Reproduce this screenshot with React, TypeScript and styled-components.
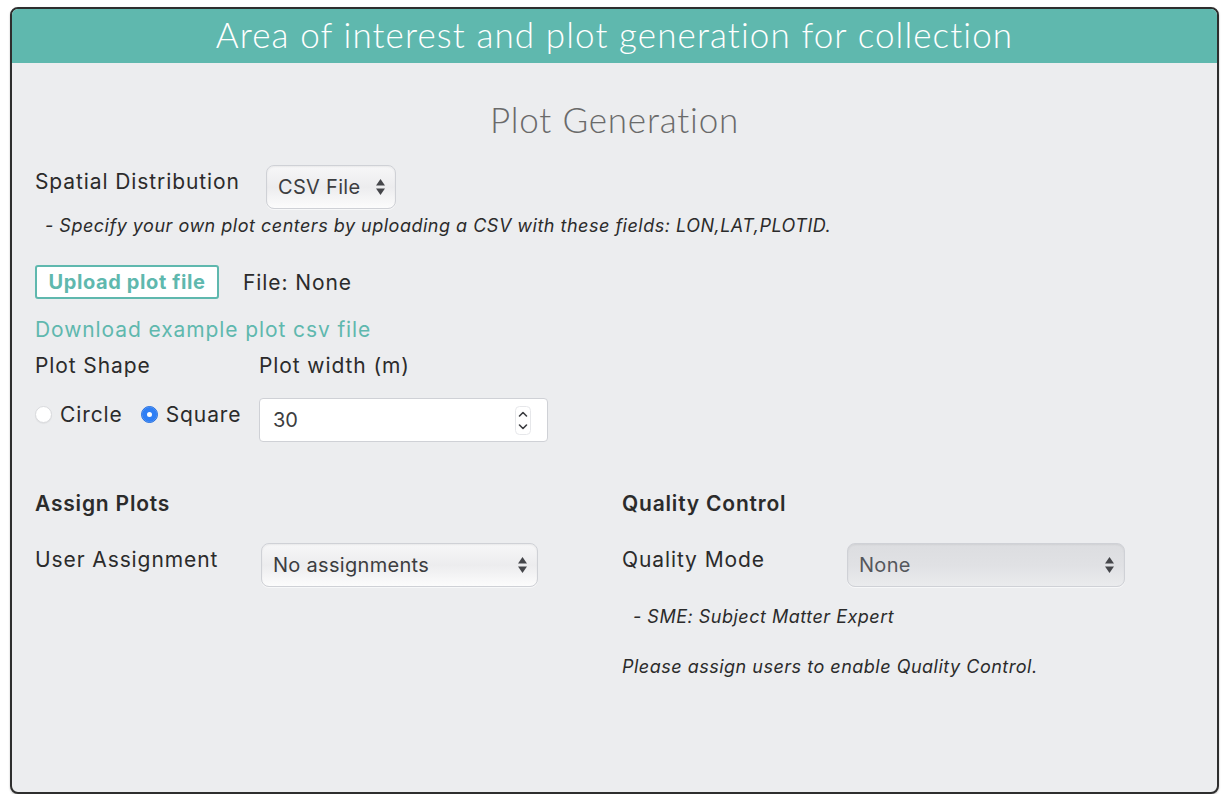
import React from "react";
import styled, { createGlobalStyle } from "styled-components";

const Global = createGlobalStyle`
  html, body { margin: 0; padding: 0; background: #ffffff; }
  body { font-family: Inter, "Open Sans", "Liberation Sans", sans-serif; color: #2b2b2b; }
  * { box-sizing: border-box; }
`;

const Panel = styled.section`
  margin: 7px 0 0 10px;
  width: 1209px;
  height: 787px;
  border: 2px solid #2e2e2e;
  border-radius: 8px;
  background: #ecedef;
  overflow: hidden;
  display: flex;
  flex-direction: column;
  box-shadow: 0 1px 2px rgba(0, 0, 0, 0.25);
`;

const Header = styled.header`
  height: 54px;
  background: #5fb8ae;
  color: #ffffff;
  display: flex;
  align-items: center;
  justify-content: center;
  font-family: Lato, "Open Sans", sans-serif;
  font-weight: 300;
  font-size: 35px;
  letter-spacing: 1.1px;
  padding-bottom: 4px;
`;

const Body = styled.div`
  padding: 0 23px;
  display: flex;
  flex-direction: column;
`;

const Title = styled.h2`
  margin: 36px 0 0;
  height: 40px;
  line-height: 40px;
  text-align: center;
  font-family: Lato, "Open Sans", sans-serif;
  font-weight: 300;
  font-size: 35px;
  color: #6a6a6a;
  letter-spacing: 0.8px;
`;

const Row = styled.div<{ $mt: number; $labelW: number }>`
  margin-top: ${(p) => p.$mt}px;
  display: grid;
  grid-template-columns: ${(p) => p.$labelW}px auto;
  align-items: center;
`;

const Label = styled.span<{ $lift?: number }>`
  font-size: 21px;
  line-height: 24px;
  letter-spacing: 0.9px;
  color: #2b2b2b;
  margin-top: ${(p) => -(p.$lift ?? 10)}px;
`;

const Note = styled.p<{ $mt: number; $indent: number }>`
  margin: ${(p) => p.$mt}px 0 0 ${(p) => p.$indent}px;
  font-size: 18px;
  line-height: 20px;
  letter-spacing: 0.5px;
  font-style: italic;
  color: #2b2b2b;
`;

const SelectWrap = styled.div<{ $w: number; $h: number; $disabled?: boolean }>`
  position: relative;
  width: ${(p) => p.$w}px;
  height: ${(p) => p.$h}px;
  border: 1px solid #cfd1d6;
  border-radius: 8px;
  background: ${(p) =>
    p.$disabled
      ? "linear-gradient(#dcdde0 0%, #e0e1e4 50%, #eaebed 100%)"
      : "linear-gradient(#f7f7f8 0%, #ececee 50%, #fcfcfc 100%)"};
  box-shadow: inset 0 1px 2px rgba(0, 0, 0, 0.06), 0 1px 0 rgba(255, 255, 255, 0.6);
  display: flex;
  align-items: center;
  padding-left: 11px;
  font-size: 20px;
  letter-spacing: 0.3px;
  color: ${(p) => (p.$disabled ? "#55575c" : "#3c3d40")};
`;

const Arrows = styled.svg`
  position: absolute;
  right: 9px;
  top: 50%;
  transform: translateY(-50%);
`;

const SelectBox: React.FC<{ w: number; h: number; disabled?: boolean; children: React.ReactNode }> = ({
  w,
  h,
  disabled,
  children,
}) => (
  <SelectWrap $w={w} $h={h} $disabled={disabled}>
    {children}
    <Arrows width="11" height="20" viewBox="0 0 11 20">
      <path d="M5.5 2 L10 8.5 L1 8.5 Z" fill="#45464a" />
      <path d="M5.5 18 L10 11.5 L1 11.5 Z" fill="#45464a" />
    </Arrows>
  </SelectWrap>
);

const UploadRow = styled.div`
  margin-top: 29px;
  display: flex;
  align-items: center;
  gap: 24px;
`;

const UploadButton = styled.button`
  height: 34px;
  width: 184px;
  border: 2px solid #5fb8ae;
  border-radius: 3px;
  background: #ffffff;
  color: #5fb8ae;
  font-family: inherit;
  font-weight: 700;
  font-size: 20px;
  letter-spacing: 0.6px;
  padding: 0;
`;

const FileText = styled.span`
  font-size: 21px;
  letter-spacing: 0.9px;
  color: #2b2b2b;
`;

const Link = styled.a`
  margin-top: 19px;
  font-size: 21px;
  line-height: 24px;
  letter-spacing: 0.9px;
  color: #5fb8ae;
  text-decoration: none;
`;

const ShapeGrid = styled.div`
  margin-top: 12px;
  display: grid;
  grid-template-columns: 224px 289px;
  grid-template-rows: 24px 43px;
  row-gap: 20px;
  align-items: center;
`;

const Radios = styled.div`
  display: flex;
  align-items: center;
  margin-top: -10px;
`;

const RadioItem = styled.label`
  display: flex;
  align-items: center;
  gap: 8px;
  font-size: 21px;
  letter-spacing: 0.9px;
  color: #2b2b2b;
  margin-right: 18px;
`;

const RadioDot = styled.span<{ $checked?: boolean }>`
  width: 17px;
  height: 17px;
  border-radius: 50%;
  display: inline-block;
  background: ${(p) => (p.$checked ? "#2f7ff5" : "#ffffff")};
  border: 1px solid ${(p) => (p.$checked ? "#2a73e0" : "#d9dadd")};
  box-shadow: ${(p) => (p.$checked ? "inset 0 0 0 5px #2f7ff5, inset 0 0 0 9px #ffffff" : "0 1px 1px rgba(0,0,0,0.05)")};
`;

const NumberBox = styled.div`
  position: relative;
  width: 289px;
  height: 44px;
  background: #ffffff;
  border: 1px solid #cfd1d6;
  border-radius: 4px;
  display: flex;
  align-items: center;
  padding-left: 13px;
  font-size: 20px;
  color: #3c3d40;
`;

const Spinner = styled.svg`
  position: absolute;
  right: 16px;
  top: 7px;
`;

const Columns = styled.div`
  margin-top: 51px;
  display: grid;
  grid-template-columns: 587px 1fr;
`;

const Column = styled.div`
  display: flex;
  flex-direction: column;
`;

const Heading = styled.h3`
  margin: 0;
  font-size: 21px;
  line-height: 24px;
  letter-spacing: 0.8px;
  font-weight: 600;
  color: #2b2b2b;
`;

export default function App() {
  return (
    <>
      <Global />
      <Panel>
        <Header>Area of interest and plot generation for collection</Header>
        <Body>
          <Title>Plot Generation</Title>
          <Row $mt={26} $labelW={231}>
            <Label>Spatial Distribution</Label>
            <SelectBox w={130} h={44}>CSV File</SelectBox>
          </Row>
          <Note $mt={7} $indent={10}>
            - Specify your own plot centers by uploading a CSV with these fields: LON,LAT,PLOTID.
          </Note>
          <UploadRow>
            <UploadButton>Upload plot file</UploadButton>
            <FileText>File: None</FileText>
          </UploadRow>
          <Link href="#">Download example plot csv file</Link>
          <ShapeGrid>
            <Label $lift={0}>Plot Shape</Label>
            <Label $lift={0}>Plot width (m)</Label>
            <Radios>
              <RadioItem>
                <RadioDot />
                Circle
              </RadioItem>
              <RadioItem>
                <RadioDot $checked />
                Square
              </RadioItem>
            </Radios>
            <NumberBox>
              30
              <Spinner width="16" height="29" viewBox="0 0 16 29">
                <rect x="0.5" y="0.5" width="15" height="28" rx="4" fill="#ffffff" stroke="#e6e7ea" />
                <path d="M4.5 10 L8 6.5 L11.5 10" fill="none" stroke="#3c3d40" strokeWidth="1.6" strokeLinecap="round" strokeLinejoin="round" />
                <path d="M4.5 19 L8 22.5 L11.5 19" fill="none" stroke="#3c3d40" strokeWidth="1.6" strokeLinecap="round" strokeLinejoin="round" />
              </Spinner>
            </NumberBox>
          </ShapeGrid>
          <Columns>
            <Column>
              <Heading>Assign Plots</Heading>
              <Row $mt={27} $labelW={226}>
                <Label>User Assignment</Label>
                <SelectBox w={277} h={44}>No assignments</SelectBox>
              </Row>
            </Column>
            <Column>
              <Heading>Quality Control</Heading>
              <Row $mt={27} $labelW={225}>
                <Label>Quality Mode</Label>
                <SelectBox w={278} h={44} disabled>None</SelectBox>
              </Row>
              <Note $mt={20} $indent={11}>- SME: Subject Matter Expert</Note>
              <Note $mt={30} $indent={0}>Please assign users to enable Quality Control.</Note>
            </Column>
          </Columns>
        </Body>
      </Panel>
    </>
  );
}
